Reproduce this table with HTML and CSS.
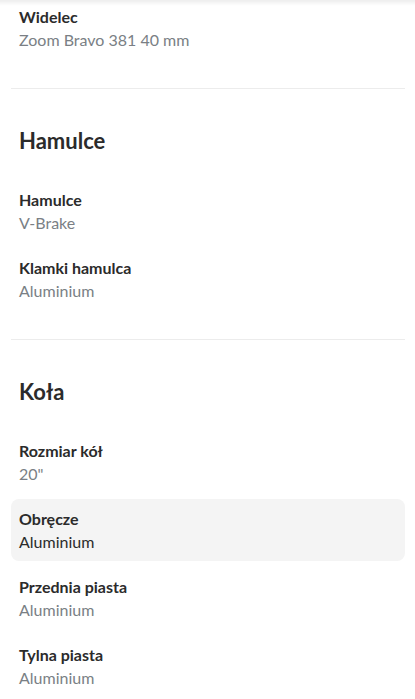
FILE: index.html
```html
<!DOCTYPE html>
<html lang="pl">
<head>
  <meta charset="UTF-8">
  <meta name="viewport" content="width=device-width, initial-scale=1.0">
  <title>Specyfikacja</title>
  <link rel="stylesheet" href="styles.css">
</head>
<body>
<div class="top-shadow"></div>

<div class="specs">

  <!-- Widelec (koniec poprzedniej sekcji) -->
  <section class="spec-section">
    <div class="spec-row">
      <div class="spec-label">Widelec</div>
      <div class="spec-value">Zoom Bravo 381 40 mm</div>
    </div>
  </section>

  <!-- Hamulce -->
  <section class="spec-section">
    <h2 class="spec-title">Hamulce</h2>
    <div class="spec-row">
      <div class="spec-label">Hamulce</div>
      <div class="spec-value">V-Brake</div>
    </div>
    <div class="spec-row">
      <div class="spec-label">Klamki hamulca</div>
      <div class="spec-value">Aluminium</div>
    </div>
  </section>

  <!-- Koła -->
  <section class="spec-section">
    <h2 class="spec-title">Koła</h2>
    <div class="spec-row">
      <div class="spec-label">Rozmiar kół</div>
      <div class="spec-value">20"</div>
    </div>
    <div class="spec-row active">
      <div class="spec-label">Obręcze</div>
      <div class="spec-value">Aluminium</div>
    </div>
    <div class="spec-row">
      <div class="spec-label">Przednia piasta</div>
      <div class="spec-value">Aluminium</div>
    </div>
    <div class="spec-row">
      <div class="spec-label">Tylna piasta</div>
      <div class="spec-value">Aluminium</div>
    </div>
  </section>

</div>
</body>
</html>
```

FILE: styles.css
```css
body {
  margin: 0;
  font-family: Lato, "Open Sans", sans-serif;
  background-color: #fff;
  color: #2b2b2b;
}

/* cień paska nad treścią */
.top-shadow {
  position: fixed;
  top: 0;
  left: 0;
  right: 0;
  height: 6px;
  background: linear-gradient(to bottom, rgba(0,0,0,0.07), rgba(0,0,0,0));
}

.specs {
  margin-top: -3px;
  padding: 0 10px 0 11px;
}

.spec-section {
  padding-bottom: 23px;
  border-bottom: 1px solid #ececec;
}

.spec-section:last-child {
  border-bottom: none;
}

.spec-title {
  margin: 0 0 24px;
  padding: 37px 8px 0;
  font-size: 22px;
  font-weight: 700;
  line-height: 30px;
  color: #2b2b2b;
}

.spec-row {
  padding: 8px 8px;
  margin-bottom: 6px;
  border-radius: 8px;
  line-height: 23px;
  font-size: 16px;
}

.spec-label {
  font-weight: 700;
  color: #2b2b2b;
}

.spec-value {
  color: #7a7f85;
}

.spec-row.active {
  background-color: #f4f4f4;
}

.spec-row.active .spec-value {
  color: #2b2b2b;
}
```
